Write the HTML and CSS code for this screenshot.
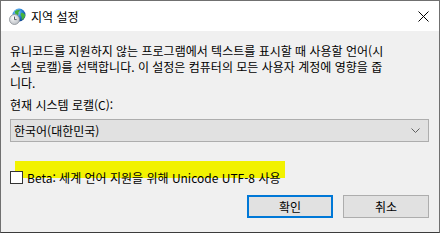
FILE: index.html
```html
<!DOCTYPE html>
<html lang="ko">
<head>
    <meta charset="UTF-8">
    <title>지역 설정</title>
    <link rel="stylesheet" href="styles.css">
</head>
<body>
    <div class="window">
        <div class="titlebar">
            <svg class="app-icon" width="17" height="17" viewBox="0 0 17 17">
                <defs>
                    <radialGradient id="sea" cx="0.35" cy="0.3" r="0.75">
                        <stop offset="0" stop-color="#9fd8ff"/>
                        <stop offset="0.5" stop-color="#2a86d8"/>
                        <stop offset="1" stop-color="#0b3f8c"/>
                    </radialGradient>
                    <radialGradient id="face" cx="0.4" cy="0.35" r="0.7">
                        <stop offset="0" stop-color="#ffffff"/>
                        <stop offset="1" stop-color="#b8bcc2"/>
                    </radialGradient>
                </defs>
                <circle cx="10" cy="7" r="6.5" fill="url(#sea)"/>
                <path d="M6 3.2 C7.5 2 9.5 1.6 11 2.3 C10.5 3.5 9 3.8 9.5 5.2 C10.2 6.6 8.4 7.4 7.2 6.6 C6.4 6 5.6 4.4 6 3.2 Z" fill="#3fae3a"/>
                <path d="M12.3 4.8 C13.8 4.6 15.8 5.8 16.2 7.4 C15.8 9.6 14.4 11.2 12.8 12 C12.4 10.6 13.2 9.6 12.4 8.6 C11.6 7.6 11.4 5.6 12.3 4.8 Z" fill="#46b43d"/>
                <circle cx="5.5" cy="11.5" r="5" fill="url(#face)" stroke="#8a8f96" stroke-width="0.8"/>
                <path d="M5.5 8.6 V11.6 H7.6" fill="none" stroke="#4a4f57" stroke-width="0.9"/>
            </svg>
            <span class="title">지역 설정</span>
            <svg class="close" width="11" height="11" viewBox="0 0 11 11">
                <path d="M0.5 0.5 L10.5 10.5 M10.5 0.5 L0.5 10.5" stroke="#000" stroke-width="1"/>
            </svg>
        </div>

        <div class="content">
            <p class="description">
                유니코드를 지원하지 않는 프로그램에서 텍스트를 표시할 때 사용할 언어(시<br>
                스템 로캘)를 선택합니다. 이 설정은 컴퓨터의 모든 사용자 계정에 영향을 줍<br>
                니다.
            </p>

            <label class="field-label">현재 시스템 로캘(C):</label>
            <div class="combo">
                <span>한국어(대한민국)</span>
                <svg class="chevron" width="9" height="5" viewBox="0 0 9 5">
                    <path d="M0.5 0.5 L4.5 4.5 L8.5 0.5" fill="none" stroke="#606060" stroke-width="1"/>
                </svg>
            </div>

            <div class="check-row">
                <span class="highlight"></span>
                <span class="checkbox"></span>
                <span class="check-text">Beta: 세계 언어 지원을 위해 Unicode UTF-8 사용</span>
            </div>

            <div class="buttons">
                <button class="btn default">확인</button>
                <button class="btn">취소</button>
            </div>
        </div>
    </div>
</body>
</html>
```

FILE: styles.css
```css
* {
    box-sizing: border-box;
}
body {
    margin: 0;
    font-family: "Noto Sans CJK KR", "Noto Sans", sans-serif;
    font-size: 12px;
    color: #000;
    background: #fff;
}
.window {
    width: 440px;
    height: 233px;
    border: 1px solid #707070;
    border-bottom-color: #3c3c3c;
    background-color: #f0f0f0;
    display: flex;
    flex-direction: column;
}
.titlebar {
    height: 30px;
    background-color: #fff;
    display: flex;
    align-items: center;
    padding: 0 10px 0 8px;
}
.app-icon {
    margin-right: 5px;
}
.title {
    flex: 1;
    font-size: 12px;
}
.close {
    margin-right: 0;
}
.content {
    padding: 12px 10px 0 9px;
}
.description {
    margin: 0;
    line-height: 16px;
}
.field-label {
    display: block;
    margin-top: 6px;
    line-height: 16px;
}
.combo {
    margin-top: 6px;
    height: 23px;
    border: 1px solid #adadad;
    background-color: #e1e1e1;
    display: flex;
    align-items: center;
    justify-content: space-between;
    padding: 0 8px 0 3px;
}
.check-row {
    position: relative;
    margin-top: 27px;
    height: 16px;
    display: flex;
    align-items: center;
}
.highlight {
    position: absolute;
    left: 5px;
    top: -8px;
    width: 270px;
    height: 17px;
    background-color: #f2f200;
}
.checkbox {
    position: relative;
    width: 13px;
    height: 13px;
    border: 1px solid #333;
    background-color: #fff;
    margin-right: 4px;
}
.check-text {
    position: relative;
}
.buttons {
    margin-top: 10px;
    display: flex;
    justify-content: flex-end;
    gap: 10px;
}
.btn {
    width: 86px;
    height: 23px;
    font-family: inherit;
    font-size: 12px;
    background-color: #e1e1e1;
    border: 1px solid #adadad;
    padding: 0;
}
.btn.default {
    border: 2px solid #0078d7;
}
```
